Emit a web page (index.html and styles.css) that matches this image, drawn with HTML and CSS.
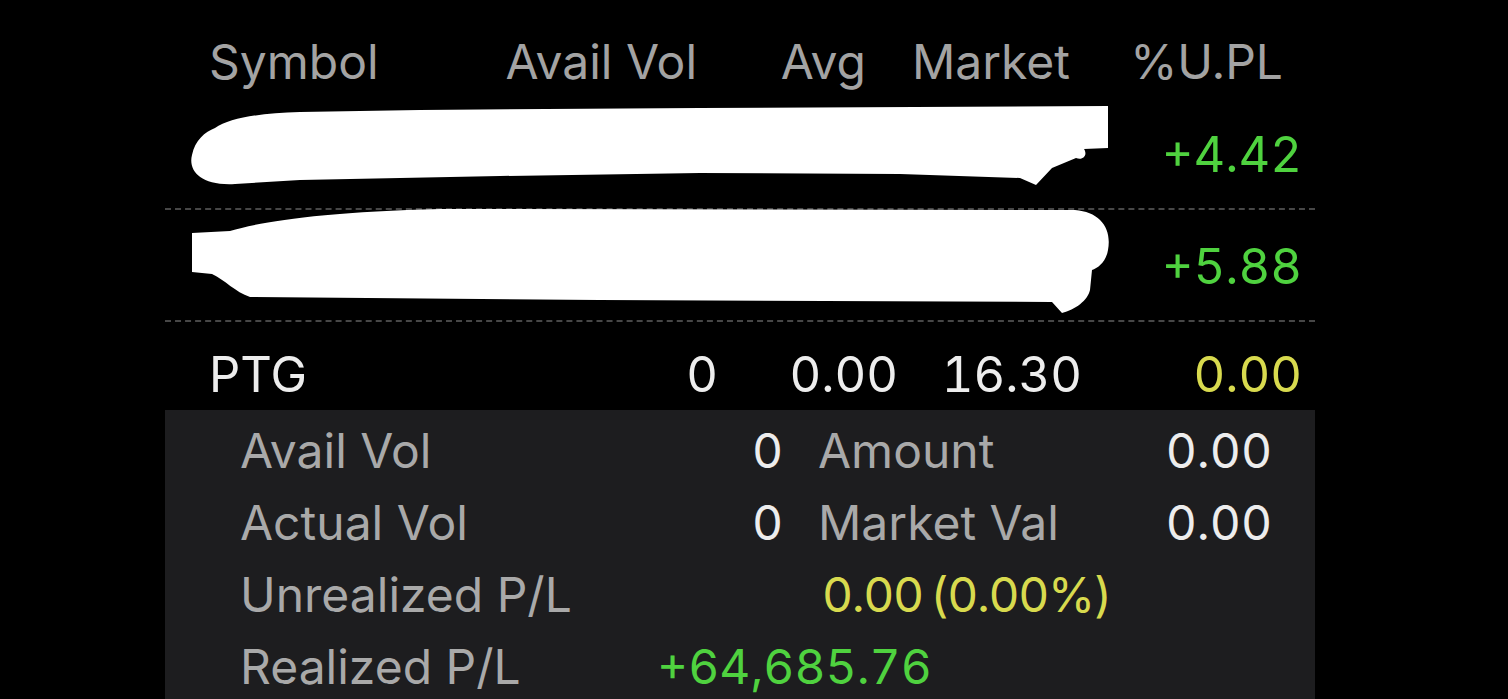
FILE: index.html
```html
<!DOCTYPE html>
<html lang="en">
<head>
    <meta charset="UTF-8">
    <meta name="viewport" content="width=device-width, initial-scale=1.0">
    <title>Portfolio</title>
    <link rel="stylesheet" href="styles.css">
</head>
<body>
    <div class="portfolio">
        <div class="row header">
            <div class="cell symbol">Symbol</div>
            <div class="cell num h-vol">Avail Vol</div>
            <div class="cell num h-avg">Avg</div>
            <div class="cell num h-mkt">Market</div>
            <div class="cell num h-upl">%U.PL</div>
        </div>

        <div class="row item dashed">
            <div class="redact">
                <svg width="955" height="112" viewBox="165 98 955 112">
                    <path fill="#fff" d="M215 128 C230 118 260 113 300 112 L420 110 L700 108 L1108 106 L1108 148 L1084 149 C1088 155 1083 161 1076 158 L1052 168 L1036 185 L1020 178 L900 174 L700 173 L500 176 L300 180 L235 184 C200 186 188 170 192 155 C195 140 205 132 215 128 Z"/>
                </svg>
            </div>
            <div class="cell num up upl">+4.42</div>
        </div>

        <div class="row item dashed">
            <div class="redact">
                <svg width="955" height="112" viewBox="165 210 955 112">
                    <path fill="#fff" d="M192 233 L230 231 C260 222 320 212 441 209 L1075 210 C1100 212 1112 228 1108 250 C1106 262 1098 268 1092 270 L1090 290 C1088 300 1075 310 1062 313 L1052 302 L600 300 L250 297 C235 292 225 280 212 274 L192 272 Z"/>
                </svg>
            </div>
            <div class="cell num up upl">+5.88</div>
        </div>

        <div class="row item selected">
            <div class="cell symbol">PTG</div>
            <div class="cell num">0</div>
            <div class="cell num">0.00</div>
            <div class="cell num">16.30</div>
            <div class="cell num flat upl">0.00</div>
        </div>

        <div class="details">
            <div class="d-label">Avail Vol</div>
            <div class="d-value">0</div>
            <div class="d-label second">Amount</div>
            <div class="d-value last">0.00</div>

            <div class="d-label">Actual Vol</div>
            <div class="d-value">0</div>
            <div class="d-label second">Market Val</div>
            <div class="d-value last">0.00</div>

            <div class="d-label">Unrealized P/L</div>
            <div class="d-wide unreal flat">0.00&#8201;(0.00%)</div>

            <div class="d-label">Realized P/L</div>
            <div class="d-wide real up">+64,685.76</div>
        </div>
    </div>
</body>
</html>
```

FILE: styles.css
```css
body {
    margin: 0;
    background: #000;
    font-family: 'Inter', 'Liberation Sans', sans-serif;
    font-feature-settings: 'tnum';
    color: #ededed;
    overflow: hidden;
}

.portfolio {
    width: 1150px;
    margin-left: 165px;
}

.row {
    display: grid;
    grid-template-columns: 300px 253px 180px 184px 220px;
    align-items: center;
}

.cell {
    white-space: nowrap;
}

.num {
    text-align: right;
}

.symbol {
    padding-left: 44px;
}

.header {
    height: 98px;
    padding-top: 34px;
    box-sizing: border-box;
    align-items: start;
    font-size: 48px;
    line-height: 56px;
    color: #a3a3a3;
    font-feature-settings: normal;
}

.h-vol { padding-right: 21px; }
.h-avg { padding-right: 32px; }
.h-mkt { padding-right: 12px; }
.h-upl { padding-right: 19px; }

.item {
    height: 112px;
    font-size: 49px;
}

.dashed {
    border-bottom: 2px dashed #474747;
    box-sizing: border-box;
}

.redact {
    grid-column: 1 / 5;
    height: 112px;
}

.redact svg {
    display: block;
    overflow: visible;
}

.upl {
    grid-column: 5;
}

.selected {
    height: 88px;
    padding-top: 18px;
    box-sizing: border-box;
    align-items: start;
    line-height: 70px;
}

.up { color: #4fd23f; }
.flat { color: #d8da4e; }

.details {
    display: grid;
    grid-template-columns: 75px 417px 126px 35px 297px 157px;
    grid-auto-rows: 72px;
    align-items: center;
    padding-top: 4px;
    height: 289px;
    box-sizing: border-box;
    background: #1d1d1f;
    font-size: 48px;
}

.d-label {
    grid-column: 2;
    color: #a9a9a9;
    white-space: nowrap;
    font-feature-settings: normal;
}

.d-label.second {
    grid-column: 5;
}

.d-value {
    grid-column: 3;
    text-align: right;
}

.d-value.last {
    grid-column: 6;
}

.d-wide {
    white-space: nowrap;
}

.unreal {
    grid-column: 5 / 7;
    padding-left: 4px;
    letter-spacing: -1.4px;
}

.real {
    grid-column: 3 / 6;
}
```
